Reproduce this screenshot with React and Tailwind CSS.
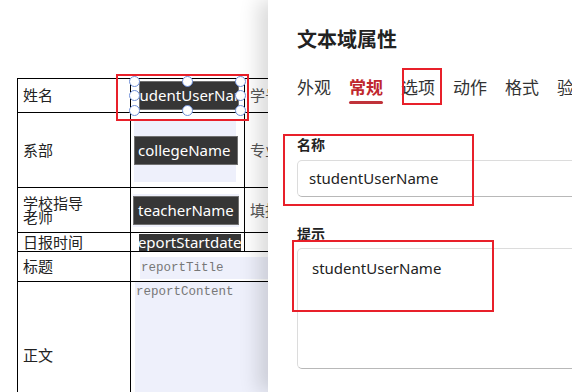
import React from "react";

function Handle({ x, y }) {
  return (
    <div
      className="absolute w-[11px] h-[11px] rounded-full bg-white border border-[#6f8fd8]"
      style={{ left: x - 5.5, top: y - 5.5 }}
    />
  );
}

function DarkField({ text, shift = 0, className = "" }) {
  return (
    <div
      className={
        "bg-[#363636] border border-[#707070] overflow-hidden whitespace-nowrap text-white text-[15px] font-['Noto_Sans',sans-serif] flex items-center " +
        className
      }
    >
      <span style={{ marginLeft: shift }}>{text}</span>
    </div>
  );
}

export default function App() {
  const label = "font-['Noto_Sans_CJK_SC',sans-serif] text-[15px] text-[#222] align-middle pl-[5px]";
  const cell = "border border-black p-0";
  const tabs = ["外观", "常规", "选项", "动作", "格式", "验证"];
  return (
    <div className="w-[572px] h-[392px] flex bg-white overflow-hidden relative font-['Noto_Sans','Noto_Sans_CJK_SC',sans-serif]">
      {/* Left: form table */}
      <div className="relative w-[268px] shrink-0 overflow-hidden pt-[78px] pl-[17px]">
        <table className="border-collapse table-fixed w-[520px]">
          <colgroup>
            <col className="w-[113px]" />
            <col className="w-[114px]" />
            <col className="w-[80px]" />
            <col />
          </colgroup>
          <tbody>
            <tr className="h-[34px]">
              <td className={cell + " " + label}>姓名</td>
              <td className={cell}>
                <div className="pl-[8px] pr-[5px]">
                  <DarkField text="studentUserName" shift={-13} className="h-[29px] border-[#8fa6e6]" />
                </div>
              </td>
              <td className={cell + " " + label + " text-[#555]"}>学号</td>
              <td className={cell}></td>
            </tr>
            <tr className="h-[75px]">
              <td className={cell + " " + label}>系部</td>
              <td className={cell}>
                <div className="ml-[3px] w-[102px] h-[63px] bg-[#eef0fb] flex items-center">
                  <DarkField text="collegeName" shift={3} className="w-[104px] h-[29px] shrink-0" />
                </div>
              </td>
              <td className={cell + " " + label + " text-[#555]"}>专业</td>
              <td className={cell}></td>
            </tr>
            <tr className="h-[45px]">
              <td className={cell + " " + label + " leading-[14px]"}>
                学校指导
                <br />
                老师
              </td>
              <td className={cell}>
                <div className="ml-[2px] w-[106px] bg-[#eef0fb] py-[2px]">
                  <DarkField text="teacherName" shift={4} className="w-[106px] h-[29px]" />
                </div>
              </td>
              <td className={cell + " " + label + " text-[#555]"}>填报</td>
              <td className={cell}></td>
            </tr>
            <tr className="h-[19px]">
              <td className={cell + " " + label + " leading-[18px]"}>日报时间</td>
              <td className={cell}>
                <div className="pl-[8px] pr-[3px]">
                  <DarkField text="reportStartdate" shift={-7} className="h-[17px] border-0 bg-[#303030] text-[15.5px]" />
                </div>
              </td>
              <td className={cell}></td>
              <td className={cell}></td>
            </tr>
            <tr className="h-[30px]">
              <td className={cell + " " + label}>标题</td>
              <td className={cell + " align-top"} colSpan={3}>
                <div className="ml-[9px] mt-[5px] h-[22px] bg-[#eef0fb] flex items-center pl-[1px] font-['Liberation_Mono',monospace] text-[12.5px] text-[#777]">
                  reportTitle
                </div>
              </td>
            </tr>
            <tr className="h-[148px]">
              <td className={cell + " " + label}>正文</td>
              <td className={cell + " align-top"} colSpan={3}>
                <div className="ml-[4px] h-[146px] bg-[#eef0fb] pl-[1px] pt-[2px] leading-[16px] font-['Liberation_Mono',monospace] text-[12.5px] text-[#777]">
                  reportContent
                </div>
              </td>
            </tr>
          </tbody>
        </table>

        {/* selection annotation */}
        <div className="absolute left-[116px] top-[74px] w-[133px] h-[47px] border-2 border-[#e8202a]" />
        <Handle x={134} y={81} />
        <Handle x={187} y={81} />
        <Handle x={240} y={81} />
        <Handle x={134} y={95.5} />
        <Handle x={240} y={95.5} />
        <Handle x={134} y={110} />
        <Handle x={187} y={110} />
        <Handle x={240} y={110} />
      </div>

      {/* Right: properties panel */}
      <div className="relative z-10 flex-1 bg-white shadow-[-10px_0_18px_rgba(0,0,0,0.14)] pl-[29px] pt-[27px] overflow-hidden">
        <div className="text-[20px] leading-[24px] font-bold text-[#222] font-['Noto_Sans_CJK_SC',sans-serif] whitespace-nowrap">
          文本域属性
        </div>
        <div className="mt-[24px] flex gap-[18px] whitespace-nowrap font-['Noto_Sans_CJK_SC',sans-serif]">
          {tabs.map((t) => {
            const active = t === "常规";
            return (
              <div key={t} className="flex flex-col shrink-0">
                <span
                  className={
                    "text-[17px] leading-[24px] " +
                    (active ? "text-[#c0272d] font-bold" : "text-[#333]")
                  }
                >
                  {t}
                </span>
                <span
                  className={
                    "mt-[2px] h-[3px] rounded-full " + (active ? "bg-[#c0323a]" : "bg-transparent")
                  }
                />
              </div>
            );
          })}
        </div>

        <div className="mt-[30px] text-[14px] leading-[20px] font-bold text-[#222] font-['Noto_Sans_CJK_SC',sans-serif]">
          名称
        </div>
        <div className="mt-[6px] w-[320px] h-[37px] rounded-[5px] border border-[#dcdcdc] border-b-[#b8b8b8] pl-[11px] flex items-center text-[15px] text-[#222] font-['Noto_Sans',sans-serif]">
          studentUserName
        </div>

        <div className="mt-[26px] text-[14px] leading-[20px] font-bold text-[#222] font-['Noto_Sans_CJK_SC',sans-serif]">
          提示
        </div>
        <div className="mt-[5px] w-[320px] h-[121px] rounded-[5px] border border-[#dcdcdc] border-b-[#b8b8b8] pl-[14px] pt-[9px] text-[15px] leading-[20px] text-[#222] font-['Noto_Sans',sans-serif]">
          studentUserName
        </div>

        {/* annotation boxes */}
        <div className="absolute left-[134px] top-[68px] w-[40px] h-[37px] border-2 border-[#e8202a]" />
        <div className="absolute left-[15px] top-[134px] w-[191px] h-[72px] border-2 border-[#e8202a]" />
        <div className="absolute left-[24px] top-[240px] w-[202px] h-[72px] border-2 border-[#e8202a]" />
      </div>
    </div>
  );
}
